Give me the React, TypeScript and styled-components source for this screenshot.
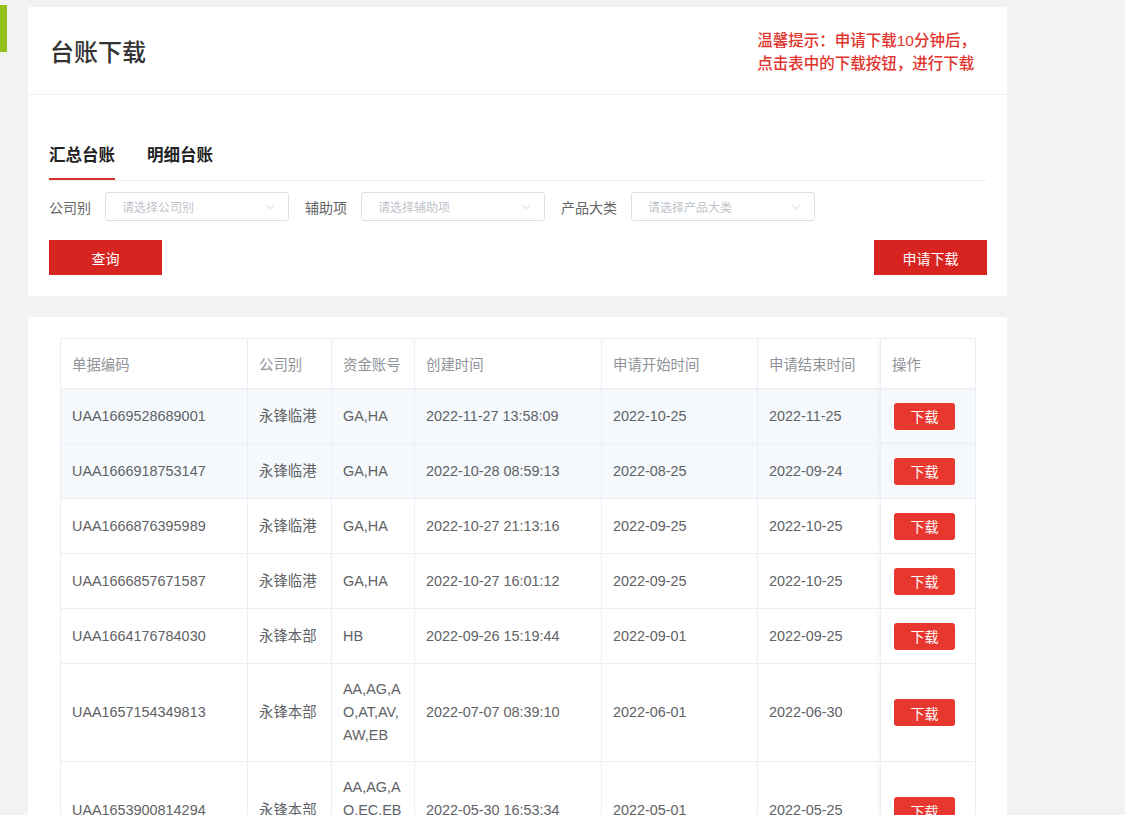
import React from 'react';
import styled, { createGlobalStyle } from 'styled-components';
import { ChevronDown } from 'lucide-react';

const GlobalStyle = createGlobalStyle`
  html, body {
    margin: 0;
    padding: 0;
    background: #f2f2f2;
    font-family: 'Liberation Sans', 'Noto Sans CJK SC', sans-serif;
    overflow: hidden;
  }
`;

const Page = styled.div`
  display: flex;
  padding-top: 7px;
  height: 808px;
  overflow: hidden;
`;

const Sidebar = styled.div`
  width: 28px;
  flex-shrink: 0;
`;

const Marker = styled.div`
  width: 7px;
  height: 47px;
  margin-top: -2px;
  background: #94c11c;
`;

const Main = styled.div`
  width: 979px;
  display: flex;
  flex-direction: column;
  gap: 21px;
`;

const Card = styled.div`
  background: #fff;
`;

const Header = styled.div`
  height: 88px;
  display: flex;
  align-items: center;
  justify-content: space-between;
  padding: 0 31px 0 22px;
  border-bottom: 1px solid #f0f0f0;
  box-sizing: border-box;
`;

const Title = styled.h1`
  margin: 0;
  font-size: 24px;
  font-weight: 500;
  color: #333;
`;

const Tip = styled.div`
  font-size: 15.5px;
  line-height: 23px;
  font-weight: 500;
  color: #e0352e;
  margin-top: 2px;
`;

const FilterSection = styled.div`
  padding: 36px 20px 21px 21px;
`;

const Tabs = styled.div`
  display: flex;
  gap: 32px;
  border-bottom: 1px solid #f0f0f0;
`;

const Tab = styled.div<{ $active?: boolean }>`
  font-size: 16.5px;
  font-weight: 700;
  color: #222;
  line-height: 24px;
  padding: 12px 0 11px;
  border-bottom: 2px solid ${(p) => (p.$active ? '#d9302b' : 'transparent')};
`;

const FilterRow = styled.div`
  display: flex;
  align-items: center;
  margin-top: 11px;
  height: 29px;
`;

const Label = styled.span<{ $first?: boolean }>`
  font-size: 14px;
  color: #666;
  margin: 0 14px 0 ${(p) => (p.$first ? '0' : '16px')};
`;

const Select = styled.div`
  width: 184px;
  height: 29px;
  box-sizing: border-box;
  border: 1px solid #dcdfe6;
  border-radius: 3px;
  display: flex;
  align-items: center;
  justify-content: space-between;
  padding: 0 11px 0 16px;
  font-size: 12px;
  color: #c0c4cc;
`;

const ButtonRow = styled.div`
  display: flex;
  justify-content: space-between;
  margin-top: 19px;
`;

const RedButton = styled.button`
  width: 113px;
  height: 35px;
  border: none;
  background: #d82421;
  color: #fff;
  font-size: 14px;
  font-family: inherit;
  cursor: pointer;
`;

const TableCard = styled(Card)`
  padding: 21px 32px 0 32px;
  flex: 1;
`;

const Table = styled.table`
  width: 915px;
  border-collapse: collapse;
  table-layout: fixed;
  font-size: 14.4px;
`;

const Th = styled.th`
  height: 49px;
  text-align: left;
  font-weight: 400;
  color: #909399;
  padding: 0 11px;
  border: 1px solid #ebeef5;
`;

const FixedTh = styled(Th)`
  box-shadow: -3px 0 6px -2px rgba(0, 0, 0, 0.08);
`;

const Tr = styled.tr<{ $hover?: boolean }>`
  background: ${(p) => (p.$hover ? '#f5f9fc' : '#fff')};
`;

const Td = styled.td<{ $fixed?: boolean }>`
  height: 55px;
  color: #606266;
  padding: ${(p) => (p.$fixed ? '12px 11px' : '14px 11px')};
  line-height: 23px;
  border: 1px solid #ebeef5;
  box-sizing: border-box;
  word-break: break-all;
  ${(p) => (p.$fixed ? 'box-shadow: -3px 0 6px -2px rgba(0,0,0,0.08);' : '')}
`;

const DownloadButton = styled.button`
  display: block;
  width: 61px;
  height: 27px;
  border: none;
  border-radius: 3px;
  background: #e8372f;
  color: #fff;
  font-size: 14px;
  font-family: inherit;
  padding: 0;
  margin-left: 2px;
`;

const widths = [187, 84, 83, 187, 156, 123, 95];

const rows = [
  ['UAA1669528689001', '永锋临港', 'GA,HA', '2022-11-27 13:58:09', '2022-10-25', '2022-11-25'],
  ['UAA1666918753147', '永锋临港', 'GA,HA', '2022-10-28 08:59:13', '2022-08-25', '2022-09-24'],
  ['UAA1666876395989', '永锋临港', 'GA,HA', '2022-10-27 21:13:16', '2022-09-25', '2022-10-25'],
  ['UAA1666857671587', '永锋临港', 'GA,HA', '2022-10-27 16:01:12', '2022-09-25', '2022-10-25'],
  ['UAA1664176784030', '永锋本部', 'HB', '2022-09-26 15:19:44', '2022-09-01', '2022-09-25'],
  ['UAA1657154349813', '永锋本部', 'AA,AG,AO,AT,AV,AW,EB', '2022-07-07 08:39:10', '2022-06-01', '2022-06-30'],
  ['UAA1653900814294', '永锋本部', 'AA,AG,AO,EC,EB GA', '2022-05-30 16:53:34', '2022-05-01', '2022-05-25'],
];

const headers = ['单据编码', '公司别', '资金账号', '创建时间', '申请开始时间', '申请结束时间'];

export default function App() {
  return (
    <>
      <GlobalStyle />
      <Page>
        <Sidebar>
          <Marker />
        </Sidebar>
        <Main>
          <Card>
            <Header>
              <Title>台账下载</Title>
              <Tip>
                温馨提示：申请下载10分钟后，
                <br />
                点击表中的下载按钮，进行下载
              </Tip>
            </Header>
            <FilterSection>
              <Tabs>
                <Tab $active>汇总台账</Tab>
                <Tab>明细台账</Tab>
              </Tabs>
              <FilterRow>
                <Label $first>公司别</Label>
                <Select>
                  请选择公司别
                  <ChevronDown size={14} strokeWidth={1.2} color="#c0c4cc" />
                </Select>
                <Label>辅助项</Label>
                <Select>
                  请选择辅助项
                  <ChevronDown size={14} strokeWidth={1.2} color="#c0c4cc" />
                </Select>
                <Label>产品大类</Label>
                <Select>
                  请选择产品大类
                  <ChevronDown size={14} strokeWidth={1.2} color="#c0c4cc" />
                </Select>
              </FilterRow>
              <ButtonRow>
                <RedButton>查询</RedButton>
                <RedButton>申请下载</RedButton>
              </ButtonRow>
            </FilterSection>
          </Card>
          <TableCard>
            <Table>
              <colgroup>
                {widths.map((w, i) => (
                  <col key={i} style={{ width: w }} />
                ))}
              </colgroup>
              <thead>
                <tr>
                  {headers.map((h) => (
                    <Th key={h}>{h}</Th>
                  ))}
                  <FixedTh>操作</FixedTh>
                </tr>
              </thead>
              <tbody>
                {rows.map((r, i) => (
                  <Tr key={r[0]} $hover={i < 2}>
                    {r.map((c, j) => (
                      <Td key={j}>{c}</Td>
                    ))}
                    <Td $fixed>
                      <DownloadButton>下载</DownloadButton>
                    </Td>
                  </Tr>
                ))}
              </tbody>
            </Table>
          </TableCard>
        </Main>
      </Page>
    </>
  );
}
